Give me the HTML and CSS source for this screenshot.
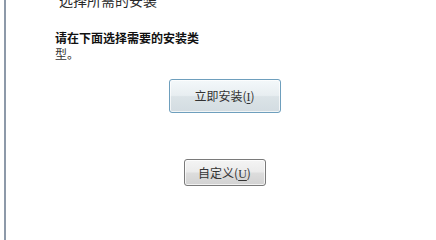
FILE: index.html
```html
<!DOCTYPE html>
<html lang="zh-CN">

<head>
    <meta charset="UTF-8">
    <title>选择所需的安装</title>
    <link rel="stylesheet" href="styles.css">
</head>

<body>

    <div class="frame">
        <div class="intro">
            <div class="title">选择所需的安装</div>
            <div class="prompt">请在下面选择需要的安装类<span class="tail">型。</span></div>
        </div>

        <div class="actions">
            <button class="btn btn-main">立即安装(<u>I</u>)</button>
            <button class="btn btn-custom">自定义(<u>U</u>)</button>
        </div>
    </div>

</body>

</html>
```

FILE: styles.css
```css
body {
    margin: 0;
    padding: 0;
    background: #fff;
    font-family: "Noto Sans CJK SC", "Noto Sans", sans-serif;
    color: #1e1e1e;
    overflow: hidden;
}

.frame {
    display: flow-root;
    margin-left: 4px;
    height: 240px;
    border-left: 2px solid #8d99a9;
}

.intro {
    padding-left: 49px;
}

.title {
    margin-top: -10px;
    padding-left: 4px;
    font-size: 14px;
    line-height: 20px;
    color: #2a2a2a;
}

.prompt {
    width: 150px;
    margin-top: 20px;
    font-size: 12px;
    font-weight: bold;
    line-height: 16px;
    color: #111;
}

.prompt .tail {
    font-weight: normal;
    color: #333;
}

.actions {
    display: flex;
    flex-direction: column;
    align-items: center;
    gap: 46px;
    padding-left: 7px;
    margin-top: 17px;
}

.btn {
    font-family: "Noto Sans CJK SC", sans-serif;
    font-size: 12px;
    color: #333;
    border-radius: 3px;
    padding: 0;
    cursor: pointer;
}

.btn u {
    font-family: "Liberation Serif", serif;
    text-decoration-thickness: 1px;
    text-underline-offset: 2px;
}

.btn-main {
    width: 112px;
    height: 34px;
    border: 1px solid #6e9fbd;
    background: linear-gradient(#f3f8fa, #e8eef1 48%, #dbe3e7 52%, #d3dce1);
    box-shadow: inset 0 0 0 1px rgba(255, 255, 255, 0.7);
}

.btn-custom {
    width: 82px;
    height: 27px;
    border: 1px solid #7a7a7a;
    background: linear-gradient(#f4f4f4, #ebebeb 48%, #dddddd 52%, #d2d2d2);
    box-shadow: inset 0 0 0 1px rgba(255, 255, 255, 0.7);
}
```
